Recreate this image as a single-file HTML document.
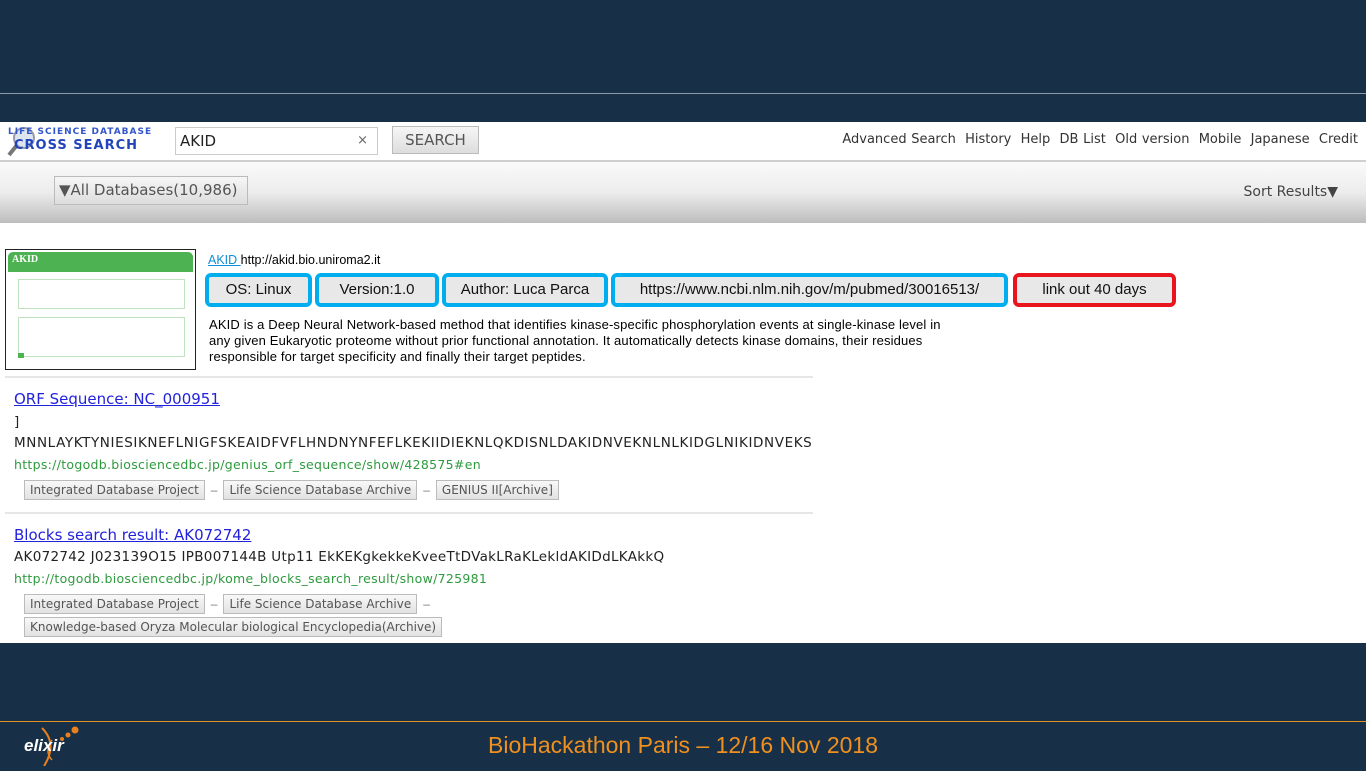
<!DOCTYPE html>
<html><head><meta charset="utf-8">
<style>
*{margin:0;padding:0;box-sizing:border-box}
body{width:1366px;height:768px;background:#173047;position:relative;overflow:hidden;font-family:"Liberation Sans","DejaVu Sans",sans-serif}
.abs{position:absolute}
.topline{left:0;top:93px;width:1366px;height:1px;background:#8a9aa8}
.botline{left:0;top:721px;width:1366px;height:1px;background:#e8901e}
.page{left:0;top:122px;width:1366px;height:521px;background:#fff}
.hdr{left:0;top:0;width:1366px;height:38px;background:#fff}
.bar{left:0;top:38px;width:1366px;height:63px;background:linear-gradient(#fafafa 0%,#ececec 50%,#bdbdbd 100%);border-top:2px solid #cfcfcf}
.nav{right:8px;top:10px;color:#333;font-family:"DejaVu Sans",sans-serif;font-size:13px;word-spacing:0.5px}
.btn{border:1px solid #bbb;background:linear-gradient(#f6f6f6,#ddd);color:#555;font-family:"DejaVu Sans",sans-serif}
.tag{display:inline-block;border:1px solid #bbb;background:linear-gradient(#f8f8f8,#e2e2e2);color:#555;font-family:"DejaVu Sans",sans-serif;font-size:12px;padding:2px 5px;margin-right:4px}
.dash{display:inline-block;color:#777;margin:0 6px 0 2px;font-size:12px}
.ib{position:absolute;top:273px;height:34px;border:4px solid #00aeef;border-radius:6px;background:#e8e8e8;font-size:15px;text-align:center;line-height:26px;color:#111}
.lnk{color:#2222dd;text-decoration:underline;font-family:"DejaVu Sans",sans-serif;font-size:15px}
.seq{font-family:"DejaVu Sans",sans-serif;font-size:13.5px;color:#222;white-space:nowrap}
.url{font-family:"DejaVu Sans",sans-serif;font-size:12.5px;color:#2e9a3e;letter-spacing:0.3px}
.sep{left:5px;width:808px;height:2px;background:#e6e6e6}
</style></head><body>
<div class="abs topline"></div>
<div class="abs page">
  <div class="abs hdr">
    <div class="abs" style="left:6px;top:2px;width:40px;height:34px">
      <svg width="40" height="34"><circle cx="18" cy="14" r="10" fill="#dde6ee" stroke="#99a" stroke-width="2"/><line x1="11" y1="21" x2="3" y2="31" stroke="#777" stroke-width="4"/></svg>
    </div>
    <div class="abs" style="left:8px;top:5px;font-size:9px;color:#3355cc;font-weight:bold;letter-spacing:1px;font-family:'DejaVu Sans',sans-serif">LIFE SCIENCE DATABASE</div>
    <div class="abs" style="left:14px;top:16px;font-size:13px;color:#2244bb;font-weight:bold;letter-spacing:1px;font-family:'DejaVu Sans',sans-serif">CROSS SEARCH</div>
    <div class="abs" style="left:175px;top:5px;width:203px;height:28px;border:1px solid #ccc;background:#fff;font-size:15px;line-height:26px;padding-left:4px;color:#222;font-family:'DejaVu Sans',sans-serif">AKID<span style="position:absolute;right:9px;color:#666;font-size:13px">×</span></div>
    <div class="abs btn" style="left:392px;top:4px;width:87px;height:28px;font-size:15px;line-height:26px;text-align:center">SEARCH</div>
    <div class="abs nav">Advanced Search&nbsp; History&nbsp; Help&nbsp; DB List&nbsp; Old version&nbsp; Mobile&nbsp; Japanese&nbsp; Credit</div>
  </div>
  <div class="abs bar">
    <div class="abs btn" style="left:54px;top:14px;width:194px;height:29px;font-size:15px;line-height:27px;padding-left:4px;color:#555">▼All Databases(10,986)</div>
    <div class="abs" style="right:28px;top:22px;font-size:14px;color:#444;font-family:'DejaVu Sans',sans-serif">Sort Results▼</div>
  </div>
</div>
<div class="abs" style="left:5px;top:249px;width:191px;height:121px;border:1px solid #222;background:#fff">
  <div style="margin:2px;height:20px;background:#4db352;border-radius:5px 5px 0 0;color:#fff;font-family:'Liberation Serif',serif;font-weight:bold;font-size:10px;padding:2px 4px">AKID</div>
  <div class="abs" style="left:12px;top:29px;width:167px;height:30px;border:1px solid #bfe3bf"></div>
  <div class="abs" style="left:12px;top:67px;width:167px;height:40px;border:1px solid #bfe3bf"></div>
  <div class="abs" style="left:12px;top:103px;width:6px;height:5px;background:#4db352"></div>
</div>
<div class="abs" style="left:208px;top:253px;font-size:12.5px;color:#000"><span style="color:#0e8ed8;text-decoration:underline">AKID </span>http://akid.bio.uniroma2.it</div>
<div class="ib" style="left:205px;width:107px">OS: Linux</div>
<div class="ib" style="left:315px;width:124px">Version:1.0</div>
<div class="ib" style="left:442px;width:166px">Author: Luca Parca</div>
<div class="ib" style="left:611px;width:397px">https://www.ncbi.nlm.nih.gov/m/pubmed/30016513/</div>
<div class="ib" style="left:1013px;width:163px;border-color:#e8141e">link out 40 days</div>
<div class="abs" style="left:209px;top:317px;width:740px;font-size:13px;line-height:16px;color:#000;letter-spacing:0.15px">AKID is a Deep Neural Network-based method that identifies kinase-specific phosphorylation events at single-kinase level in any given Eukaryotic proteome without prior functional annotation. It automatically detects kinase domains, their residues responsible for target specificity and finally their target peptides.</div>
<div class="abs sep" style="top:376px"></div>
<div class="abs lnk" style="left:14px;top:390px">ORF Sequence: NC_000951</div>
<div class="abs seq" style="left:14px;top:414px">]</div>
<div class="abs seq" style="left:14px;top:435px;letter-spacing:0.6px">MNNLAYKTYNIESIKNEFLNIGFSKEAIDFVFLHNDNYNFEFLKEKIIDIEKNLQKDISNLDAKIDNVEKNLNLKIDGLNIKIDNVEKS</div>
<div class="abs url" style="left:14px;top:457px">https://togodb.biosciencedbc.jp/genius_orf_sequence/show/428575#en</div>
<div class="abs" style="left:24px;top:480px;white-space:nowrap"><span class="tag">Integrated Database Project</span><span class="dash">–</span><span class="tag">Life Science Database Archive</span><span class="dash">–</span><span class="tag">GENIUS II[Archive]</span></div>
<div class="abs sep" style="top:512px"></div>
<div class="abs lnk" style="left:14px;top:526px">Blocks search result: AK072742</div>
<div class="abs seq" style="left:14px;top:549px;letter-spacing:0.3px">AK072742 J023139O15 IPB007144B Utp11 EkKEKgkekkeKveeTtDVakLRaKLekldAKIDdLKAkkQ</div>
<div class="abs url" style="left:14px;top:571px">http://togodb.biosciencedbc.jp/kome_blocks_search_result/show/725981</div>
<div class="abs" style="left:24px;top:594px;white-space:nowrap"><span class="tag">Integrated Database Project</span><span class="dash">–</span><span class="tag">Life Science Database Archive</span><span class="dash">–</span></div>
<div class="abs" style="left:24px;top:617px;white-space:nowrap"><span class="tag">Knowledge-based Oryza Molecular biological Encyclopedia(Archive)</span></div>
<div class="abs botline"></div>
<div class="abs" style="left:22px;top:724px;width:60px;height:40px">
  <svg width="60" height="42"><path d="M20 4 Q36 20 22 42" stroke="#e8801e" stroke-width="2" fill="none"/><path d="M30 16 Q22 28 30 36" stroke="#e8801e" stroke-width="1.5" fill="none"/><circle cx="53" cy="6" r="3.5" fill="#e8801e"/><circle cx="46" cy="11" r="2.5" fill="#e8801e"/><circle cx="40" cy="15" r="2" fill="#e8801e"/></svg>
  <div class="abs" style="left:2px;top:12px;color:#fff;font-style:italic;font-weight:bold;font-size:17px">elixir</div>
</div>
<div class="abs" style="left:0;top:732px;width:1366px;text-align:center;color:#f0901e;font-size:23px">BioHackathon Paris – 12/16 Nov 2018</div>
</body></html>
